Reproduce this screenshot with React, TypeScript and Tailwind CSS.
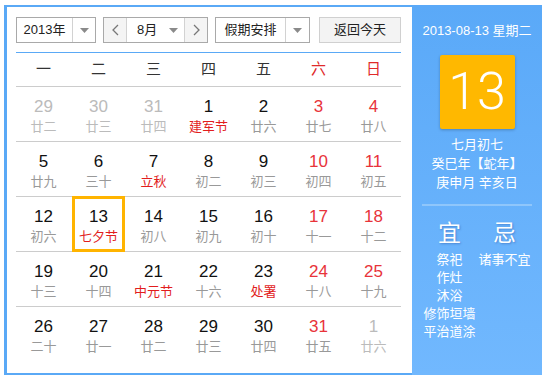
import React from 'react';

type Day = {
  n: number;
  lunar: string;
  other?: boolean;
  fest?: boolean;
  selected?: boolean;
};

const weeks: Day[][] = [
  [
    { n: 29, lunar: '廿二', other: true },
    { n: 30, lunar: '廿三', other: true },
    { n: 31, lunar: '廿四', other: true },
    { n: 1, lunar: '建军节', fest: true },
    { n: 2, lunar: '廿六' },
    { n: 3, lunar: '廿七' },
    { n: 4, lunar: '廿八' },
  ],
  [
    { n: 5, lunar: '廿九' },
    { n: 6, lunar: '三十' },
    { n: 7, lunar: '立秋', fest: true },
    { n: 8, lunar: '初二' },
    { n: 9, lunar: '初三' },
    { n: 10, lunar: '初四' },
    { n: 11, lunar: '初五' },
  ],
  [
    { n: 12, lunar: '初六' },
    { n: 13, lunar: '七夕节', fest: true, selected: true },
    { n: 14, lunar: '初八' },
    { n: 15, lunar: '初九' },
    { n: 16, lunar: '初十' },
    { n: 17, lunar: '十一' },
    { n: 18, lunar: '十二' },
  ],
  [
    { n: 19, lunar: '十三' },
    { n: 20, lunar: '十四' },
    { n: 21, lunar: '中元节', fest: true },
    { n: 22, lunar: '十六' },
    { n: 23, lunar: '处署', fest: true },
    { n: 24, lunar: '十八' },
    { n: 25, lunar: '十九' },
  ],
  [
    { n: 26, lunar: '二十' },
    { n: 27, lunar: '廿一' },
    { n: 28, lunar: '廿二' },
    { n: 29, lunar: '廿三' },
    { n: 30, lunar: '廿四' },
    { n: 31, lunar: '廿五' },
    { n: 1, lunar: '廿六', other: true },
  ],
];

const weekdays = ['一', '二', '三', '四', '五', '六', '日'];

function Caret() {
  return (
    <svg width="9" height="5" viewBox="0 0 9 5">
      <path d="M0 0h9L4.5 5z" fill="#8a8a8a" />
    </svg>
  );
}

function Chevron({ dir }: { dir: 'left' | 'right' }) {
  return (
    <svg width="7" height="12" viewBox="0 0 7 12">
      <polyline
        points={dir === 'left' ? '6,1 1,6 6,11' : '1,1 6,6 1,11'}
        fill="none"
        stroke="#777"
        strokeWidth="1.3"
      />
    </svg>
  );
}

function Toolbar() {
  return (
    <div className="flex h-[26px] items-stretch text-[13px] text-[#222]">
      {/* year */}
      <div className="flex w-[80px] border border-[#a9a9a9]">
        <div className="flex w-[56px] items-center justify-center border-r border-[#d2d2d2]">2013年</div>
        <div className="flex flex-1 items-center justify-center">
          <Caret />
        </div>
      </div>

      {/* month */}
      <div className="ml-[7px] flex w-[105px] border border-[#a9a9a9]">
        <div className="flex w-[23px] items-center justify-center border-r border-[#d2d2d2] bg-[#f4f4f4]">
          <Chevron dir="left" />
        </div>
        <div className="flex flex-1 items-center justify-between pl-[10px] pr-[6px]">
          <span>8月</span>
          <Caret />
        </div>
        <div className="flex w-[23px] items-center justify-center border-l border-[#d2d2d2] bg-[#f4f4f4]">
          <Chevron dir="right" />
        </div>
      </div>

      {/* holidays */}
      <div className="ml-[7px] flex w-[95px] border border-[#a9a9a9]">
        <div className="flex w-[70px] items-center justify-center border-r border-[#d2d2d2]">假期安排</div>
        <div className="flex flex-1 items-center justify-center">
          <Caret />
        </div>
      </div>

      <div className="ml-[9px] flex w-[82px] items-center justify-center border border-[#d0d0d0] bg-[#f3f3f3]">
        返回今天
      </div>
    </div>
  );
}

function Cell({ d, col }: { d: Day; col: number }) {
  const weekend = col >= 5;
  const numColor = d.other ? 'text-[#bbbbbb]' : weekend ? 'text-[#e8333a]' : 'text-[#111]';
  const lunarColor = d.other ? 'text-[#bbbbbb]' : d.fest ? 'text-[#e21d1d]' : 'text-[#999]';
  return (
    <div className="relative flex flex-col items-center pt-[10px]">
      <div className={`text-[17px] leading-5 ${numColor}`}>{d.n}</div>
      <div className={`mt-[1px] text-[13px] leading-[18px] ${lunarColor}`}>{d.lunar}</div>
      {d.selected && (
        <div className="pointer-events-none absolute -top-px bottom-[-1px] left-px right-px border-[3px] border-[#ffb400]" />
      )}
    </div>
  );
}

function Calendar() {
  return (
    <div className="flex h-full w-[405px] flex-col bg-white pl-[9px] pr-[11px] pt-[10px]">
      <Toolbar />
      <div className="mt-[9px] h-px bg-[#5aa9f6]" />
      <div className="grid h-[34px] grid-cols-7 border-b border-[#cccccc] text-[15px]">
        {weekdays.map((w, i) => (
          <div key={w} className={`flex items-center justify-center ${i >= 5 ? 'text-[#e02a2a]' : 'text-[#333]'}`}>
            {w}
          </div>
        ))}
      </div>
      {weeks.map((wk, r) => (
        <div
          key={r}
          className={`grid h-[55px] grid-cols-7 ${r < weeks.length - 1 ? 'border-b border-[#cccccc]' : ''}`}
        >
          {wk.map((d, c) => (
            <Cell key={c} d={d} col={c} />
          ))}
        </div>
      ))}
    </div>
  );
}

function SidePanel() {
  const yi = ['祭祀', '作灶', '沐浴', '修饰垣墙', '平治道涂'];
  return (
    <div className="-mt-[2px] -mb-[2px] flex w-[130px] flex-col items-center bg-gradient-to-b from-[#5aa9f8] to-[#71b8fe] pt-[17px] text-white">
      <div className="text-[13px] leading-[18px]">2013-08-13 星期二</div>
      <div className="mt-[15px] flex h-[74px] w-[75px] items-center justify-center rounded-[2px] bg-[#ffb800] shadow-[0_1px_3px_rgba(0,0,0,0.25)]">
        <span className="font-['Roboto','Liberation_Sans',sans-serif] text-[52px] font-light leading-none">13</span>
      </div>
      <div className="mt-[6px] text-[13px] leading-[19px]">七月初七</div>
      <div className="text-[13px] leading-[19px]">癸巳年【蛇年】</div>
      <div className="text-[13px] leading-[19px]">庚申月 辛亥日</div>
      <div className="mt-[12px] h-[2px] w-[110px] bg-[#8fc6fb]" />
      <div className="mt-[14px] grid w-[110px] grid-cols-2">
        <div className="flex flex-col items-center">
          <div className="text-[23px] leading-[26px] [text-shadow:1px_1px_2px_rgba(40,80,160,0.45)]">宜</div>
          <div className="mt-[5px] flex flex-col items-center text-[13px] leading-[18px]">
            {yi.map((t) => (
              <div key={t} className="whitespace-nowrap">
                {t}
              </div>
            ))}
          </div>
        </div>
        <div className="flex flex-col items-center">
          <div className="text-[23px] leading-[26px] [text-shadow:1px_1px_2px_rgba(40,80,160,0.45)]">忌</div>
          <div className="mt-[5px] whitespace-nowrap text-[13px] leading-[18px]">诸事不宜</div>
        </div>
      </div>
    </div>
  );
}

export default function App() {
  return (
    <div className="h-[379px] w-[548px] bg-white pl-[4px] pt-[5px] font-['Liberation_Sans','Noto_Sans_CJK_SC',sans-serif]">
      <div className="flex h-[370px] w-[538px] border-y-2 border-l-[3px] border-[#5aa9f6]">
        <Calendar />
        <SidePanel />
      </div>
    </div>
  );
}
